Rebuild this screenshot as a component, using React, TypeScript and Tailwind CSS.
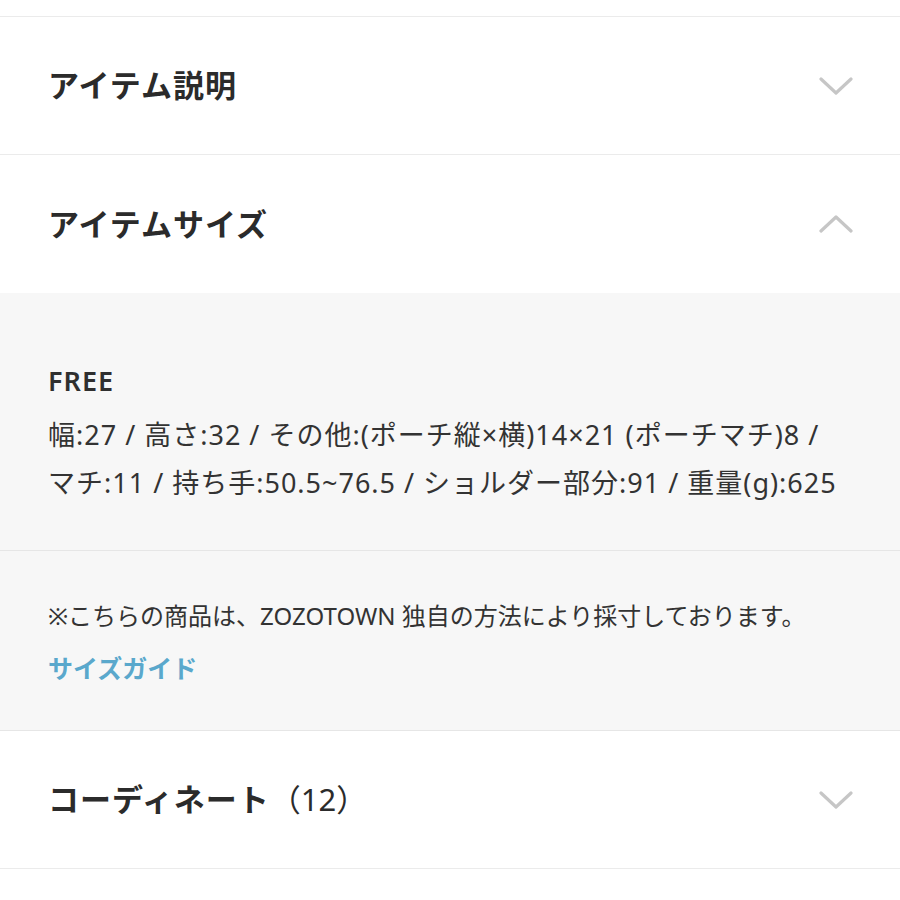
import React from 'react';

const font = { fontFamily: '"Noto Sans", "Noto Sans CJK JP", sans-serif' };

function Chevron({ up = false }: { up?: boolean }) {
  return (
    <svg width="34" height="20" viewBox="0 0 34 20" fill="none" className="shrink-0">
      <polyline
        points={up ? '2,17 17,3 32,17' : '2,3 17,17 32,3'}
        stroke="#c6c6c6"
        strokeWidth="3.2"
        strokeLinecap="round"
        strokeLinejoin="round"
      />
    </svg>
  );
}

function Header({ title, open = false, extra, border = true }: { title: string; open?: boolean; extra?: string; border?: boolean }) {
  return (
    <div
      className={`flex items-center justify-between pl-12 pr-[47px] bg-white ${
        border ? 'h-[138px] border-b border-[#ebebeb]' : 'h-[138px]'
      }`}
    >
      <h2 className="text-[31px] font-bold text-[#2b2b2b] tracking-[1px]">
        {title}
        {extra && <span className="font-normal tracking-[0px]">{extra}</span>}
      </h2>
      <Chevron up={open} />
    </div>
  );
}

export default function App() {
  return (
    <div className="w-[900px] min-h-[900px] bg-white text-[#333]" style={font}>
      <div className="h-[17px] border-b border-[#ebebeb]" />
      <Header title="アイテム説明" />
      <Header title="アイテムサイズ" open border={false} />

      <div className="bg-[#f7f7f7] pl-12 pt-[64px] pb-[43px] border-b border-[#e6e6e6]">
        <p className="text-[27px] leading-[48px] font-semibold tracking-[1px] text-[#2f2f2f]">FREE</p>
        <p className="mt-[6px] text-[27px] leading-[48px] tracking-[1px] text-[#333] whitespace-nowrap">
          幅:27 / 高さ:32 / その他:(ポーチ縦×横)14×21 (ポーチマチ)8 /
          <br />
          マチ:11 / 持ち手:50.5~76.5 / ショルダー部分:91 / 重量(g):625
        </p>
      </div>

      <div className="bg-[#f7f7f7] pl-12 pt-[45px] pb-[42px] border-b border-[#e6e6e6]">
        <p className="text-[24px] leading-[40px] text-[#333] whitespace-nowrap">
          ※こちらの商品は、ZOZOTOWN 独自の方法により採寸しております。
        </p>
        <a className="mt-[12px] block text-[25px] leading-[40px] font-bold text-[#5aa8cc]">サイズガイド</a>
      </div>

      <Header title="コーディネート" extra="（12）" />
    </div>
  );
}
